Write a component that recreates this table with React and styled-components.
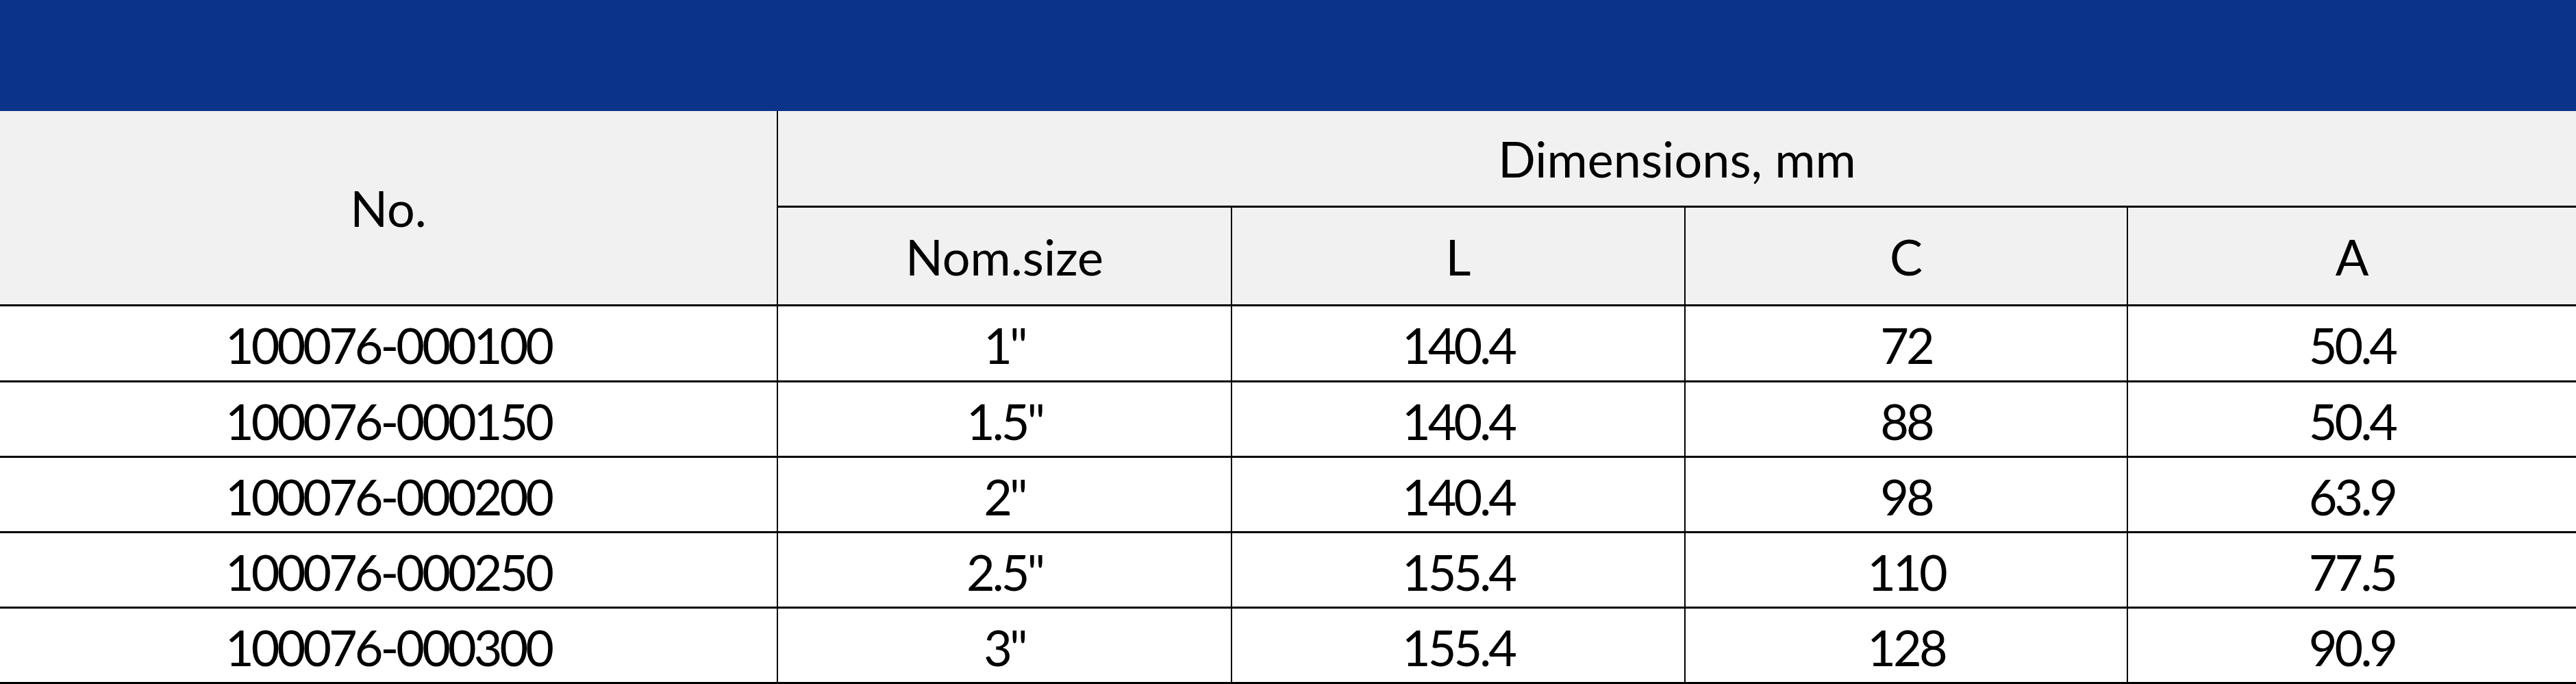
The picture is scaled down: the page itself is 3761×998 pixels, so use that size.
import styled, { createGlobalStyle } from "styled-components";

const GlobalStyle = createGlobalStyle`
  html, body {
    margin: 0;
    padding: 0;
    background: #ffffff;
  }
  body {
    font-family: Lato, "Open Sans", "Liberation Sans", sans-serif;
    color: #000;
  }
`;

const rows = [
  { no: "100076-000100", size: '1"', l: "140.4", c: "72", a: "50.4" },
  { no: "100076-000150", size: '1.5"', l: "140.4", c: "88", a: "50.4" },
  { no: "100076-000200", size: '2"', l: "140.4", c: "98", a: "63.9" },
  { no: "100076-000250", size: '2.5"', l: "155.4", c: "110", a: "77.5" },
  { no: "100076-000300", size: '3"', l: "155.4", c: "128", a: "90.9" },
];

function App() {
  return (
    <Page>
      <GlobalStyle />
      <TitleBar />
      <Grid>
        <Cell $head $rowSpan={2}>
          No.
        </Cell>
        <Cell $head $colSpan={4}>
          Dimensions, mm
        </Cell>
        <Cell $head>Nom.size</Cell>
        <Cell $head>L</Cell>
        <Cell $head>C</Cell>
        <Cell $head>A</Cell>
        {rows.map((r) => (
          <Row key={r.no}>
            <Cell>{r.no}</Cell>
            <Cell>{r.size}</Cell>
            <Cell>{r.l}</Cell>
            <Cell>{r.c}</Cell>
            <Cell>{r.a}</Cell>
          </Row>
        ))}
      </Grid>
    </Page>
  );
}

export default App;

const Page = styled.div`
  width: 3761px;
  display: flex;
  flex-direction: column;
`;

const TitleBar = styled.div`
  height: 162px;
  background-color: #0b338a;
`;

const Grid = styled.div`
  display: grid;
  grid-template-columns: 1134px 661px 660px 644px 1fr;
  grid-template-rows: 138px 141px 108px repeat(4, 107px);
  column-gap: 2px;
  row-gap: 3px;
  padding-bottom: 3px;
  background-color: #000;
`;

const Row = styled.div`
  display: contents;
`;

const Cell = styled.div`
  display: flex;
  align-items: center;
  justify-content: center;
  padding-top: ${(p) => (p.$head ? "0" : "4px")};
  background-color: ${(p) => (p.$head ? "#f1f1f1" : "#ffffff")};
  grid-row: ${(p) => (p.$rowSpan ? `span ${p.$rowSpan}` : "auto")};
  grid-column: ${(p) => (p.$colSpan ? `span ${p.$colSpan}` : "auto")};
  font-size: 72px;
  line-height: 1;
  letter-spacing: ${(p) => (p.$head ? "0" : "-4px")};
  white-space: nowrap;
`;
